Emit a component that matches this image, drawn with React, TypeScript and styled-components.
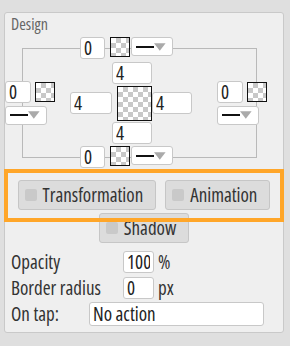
import styled, { createGlobalStyle } from 'styled-components';

const GlobalStyle = createGlobalStyle`
  html, body { margin: 0; padding: 0; background: #dfdfdf; }
  body {
    font-family: 'Open Sans', 'Noto Sans', sans-serif;
    font-stretch: 75%;
    color: #222;
  }
  * { box-sizing: border-box; }
`;

const Page = styled.div`
  padding: 12px 6px 10px 4px;
`;

const Panel = styled.section`
  width: 280px;
  border: 1px solid #c9c9c9;
  border-radius: 3px;
  background: #efefef;
  padding-bottom: 7px;
`;

const Title = styled.div`
  height: 24px;
  padding: 2px 6px 0;
  font-size: 16px;
  line-height: 18px;
  color: #666;
`;

const Editor = styled.div`
  display: grid;
  grid-template-columns: 50px 162px 49px;
  grid-template-rows: 22px 87px 22px;
`;

const Frame = styled.div`
  grid-column: 1 / -1;
  grid-row: 1 / -1;
  margin: 11px 9px 10px 17px;
  border: 1px solid #b9b9b9;
`;

const EdgeGroup = styled.div<{ $row: number }>`
  grid-column: 2;
  grid-row: ${(p) => p.$row};
  display: flex;
  align-items: flex-start;
  margin-left: 25px;
`;

const SideGroup = styled.div<{ $col: number }>`
  grid-column: ${(p) => p.$col};
  grid-row: 2;
  align-self: center;
  display: flex;
  flex-direction: column;
  gap: 3px;
`;

const SideTop = styled.div`
  display: flex;
  align-items: center;
  gap: 4px;
`;

const Field = styled.input<{ $w: number; $h?: number }>`
  width: ${(p) => p.$w}px;
  height: ${(p) => p.$h ?? 22}px;
  margin: 0;
  padding: 0 3px;
  border: 1px solid #c8c8c8;
  border-radius: 3px;
  background: #fff;
  font: inherit;
  font-size: 19px;
  color: #222;
  outline: none;
`;

const Swatch = styled.div<{ $size: number }>`
  width: ${(p) => p.$size}px;
  height: ${(p) => p.$size}px;
  flex: none;
  border: 1px solid #111;
  background-color: #fff;
  background-image:
    linear-gradient(45deg, #c8c8c8 25%, transparent 25%, transparent 75%, #c8c8c8 75%),
    linear-gradient(45deg, #c8c8c8 25%, transparent 25%, transparent 75%, #c8c8c8 75%);
  background-size: 10px 10px;
  background-position: 0 0, 5px 5px;
`;

const EdgeSwatch = styled(Swatch)`
  margin: 0 1px 0 5px;
`;

const Select = styled.div`
  width: 42px;
  height: 19px;
  flex: none;
  display: flex;
  align-items: center;
  justify-content: space-between;
  padding: 0 6px 0 4px;
  border: 1px solid #c8c8c8;
  border-radius: 3px;
  background: #fff;
`;

const LineStyle = styled.span`
  width: 19px;
  border-top: 2px solid #111;
`;

const Center = styled.div`
  grid-column: 2;
  grid-row: 2;
  margin: 3px 0 0 15px;
  display: grid;
  grid-template-columns: 42px 40px 40px;
  grid-template-rows: 22px 37px 23px;
`;

const Cell = styled.div<{ $col: number; $row: number; $align?: string; $justify?: string }>`
  grid-column: ${(p) => p.$col};
  grid-row: ${(p) => p.$row};
  align-self: ${(p) => p.$align ?? 'start'};
  justify-self: ${(p) => p.$justify ?? 'start'};
  display: flex;
`;

const Buttons = styled.div`
  position: relative;
  margin-top: 12px;
  display: flex;
  flex-direction: column;
  align-items: center;
  gap: 3px;
`;

const ButtonRow = styled.div`
  display: flex;
  justify-content: center;
  gap: 9px;
`;

const Toggle = styled.button`
  height: 30px;
  display: inline-flex;
  align-items: center;
  gap: 6px;
  margin: 0;
  padding: 0 12px 0 6px;
  border: 1px solid #c6c6c6;
  border-radius: 3px;
  background: #dcdcdc;
  font: inherit;
  font-size: 19px;
  color: #333;
`;

const Check = styled.span`
  width: 12px;
  height: 12px;
  border-radius: 2px;
  background: #c9c9c9;
`;

const Highlight = styled.div`
  position: absolute;
  top: -11px;
  left: -1px;
  right: -1px;
  height: 53px;
  border: 4px solid #ffa629;
  pointer-events: none;
`;

const Form = styled.div`
  margin-top: 8px;
  padding-left: 6px;
  display: flex;
  flex-direction: column;
  gap: 4px;
`;

const Row = styled.div`
  display: flex;
  align-items: center;
  height: 22px;
`;

const Label = styled.span<{ $w: number }>`
  width: ${(p) => p.$w}px;
  font-size: 19px;
  color: #333;
`;

const Unit = styled.span`
  margin-left: 4px;
  font-size: 19px;
  color: #333;
`;

function Dropdown() {
  return (
    <Select>
      <LineStyle />
      <svg width="12" height="8" viewBox="0 0 12 8">
        <path d="M0 0 H12 L6 8 Z" fill="#aaa" />
      </svg>
    </Select>
  );
}

function Edge({ row }: { row: number }) {
  return (
    <EdgeGroup $row={row}>
      <Field $w={25} defaultValue="0" />
      <EdgeSwatch $size={20} />
      <Dropdown />
    </EdgeGroup>
  );
}

function Side({ col }: { col: number }) {
  return (
    <SideGroup $col={col}>
      <SideTop>
        <Field $w={26} defaultValue="0" />
        <Swatch $size={20} />
      </SideTop>
      <Dropdown />
    </SideGroup>
  );
}

export default function App() {
  return (
    <Page>
      <GlobalStyle />
      <Panel>
        <Title>Design</Title>
        <Editor>
          <Frame />
          <Edge row={1} />
          <Side col={1} />
          <Center>
            <Cell $col={2} $row={1}>
              <Field $w={40} defaultValue="4" />
            </Cell>
            <Cell $col={1} $row={2} $align="center">
              <Field $w={42} defaultValue="4" />
            </Cell>
            <Cell $col={2} $row={2} $align="end" $justify="end">
              <Swatch $size={35} />
            </Cell>
            <Cell $col={3} $row={2} $align="center">
              <Field $w={40} defaultValue="4" />
            </Cell>
            <Cell $col={2} $row={3} $align="end">
              <Field $w={40} defaultValue="4" />
            </Cell>
          </Center>
          <Side col={3} />
          <Edge row={3} />
        </Editor>
        <Buttons>
          <ButtonRow>
            <Toggle>
              <Check />
              Transformation
            </Toggle>
            <Toggle>
              <Check />
              Animation
            </Toggle>
          </ButtonRow>
          <ButtonRow>
            <Toggle>
              <Check />
              Shadow
            </Toggle>
          </ButtonRow>
          <Highlight />
        </Buttons>
        <Form>
          <Row>
            <Label $w={112}>Opacity</Label>
            <Field $w={31} defaultValue="100" />
            <Unit>%</Unit>
          </Row>
          <Row>
            <Label $w={112}>Border radius</Label>
            <Field $w={31} defaultValue="0" />
            <Unit>px</Unit>
          </Row>
          <Row>
            <Label $w={78}>On tap:</Label>
            <Field $w={175} $h={24} defaultValue="No action" />
          </Row>
        </Form>
      </Panel>
    </Page>
  );
}
